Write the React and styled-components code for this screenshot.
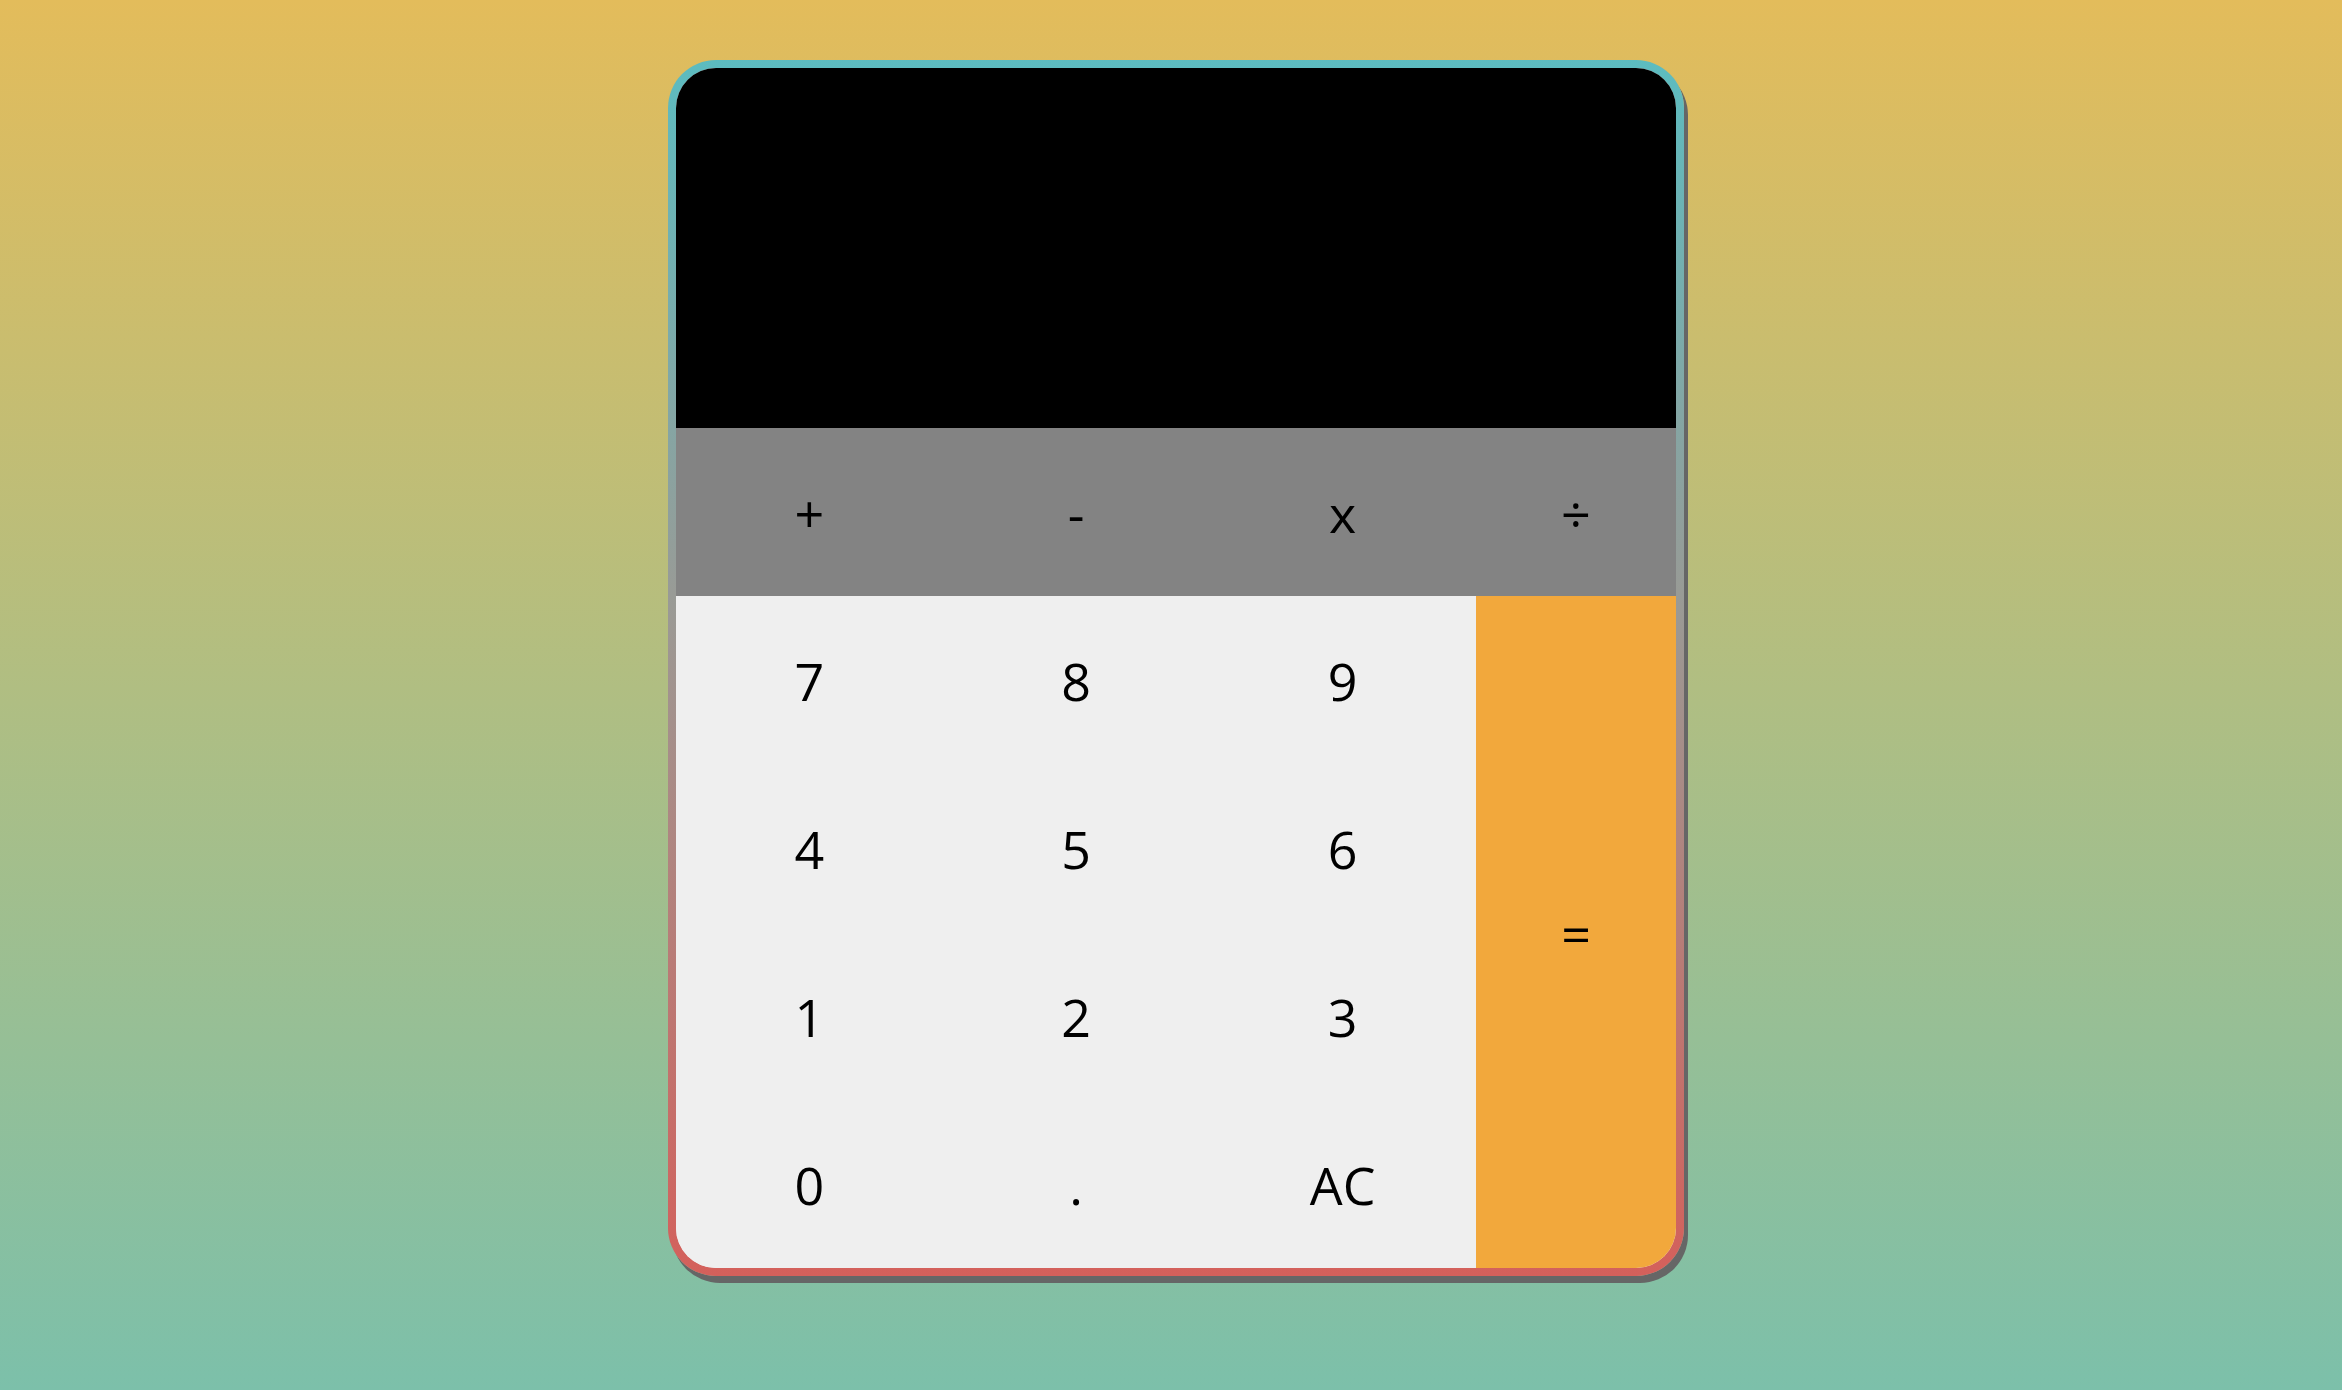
import styled, { createGlobalStyle } from 'styled-components';

const GlobalStyle = createGlobalStyle`
  html, body {
    margin: 0;
    padding: 0;
  }
  body {
    font-family: 'Open Sans', 'Noto Sans', sans-serif;
    background: linear-gradient(to bottom, #e3bc5b 0%, #7cc0aa 100%);
    min-height: 100vh;
  }
`;

function App() {
  const digits = ['7', '8', '9', '4', '5', '6', '1', '2', '3', '0', '.', 'AC'];
  return (
    <>
      <GlobalStyle />
      <Page>
        <Calculator>
          <Display></Display>
          <Operators>
            <Key $tone="op">+</Key>
            <Key $tone="op">-</Key>
            <Key $tone="op">x</Key>
            <Key $tone="op">÷</Key>
          </Operators>
          <Keypad>
            <Numbers>
              {digits.map((d) => (
                <Key key={d}>{d}</Key>
              ))}
            </Numbers>
            <Equals>=</Equals>
          </Keypad>
        </Calculator>
      </Page>
    </>
  );
}

export default App;

const Page = styled.div`
  display: flex;
  justify-content: center;
  align-items: flex-start;
  padding: 60px 0 0 10px;
  min-height: 100vh;
  box-sizing: border-box;
`;

const Calculator = styled.div`
  width: 1000px;
  border: 8px solid transparent;
  border-radius: 48px;
  background:
    linear-gradient(#efefef, #efefef) padding-box,
    linear-gradient(to bottom, #5cbcc0 0%, #9a9a95 45%, #d4605b 100%) border-box;
  box-shadow: 4px 7px 0 #666;
  overflow: hidden;
`;

const Display = styled.div`
  height: 360px;
  background: #000;
`;

const Operators = styled.div`
  display: grid;
  grid-template-columns: 1fr 1fr 1fr 200px;
  background: #838383;
  height: 168px;
`;

const Keypad = styled.div`
  display: grid;
  grid-template-columns: 800px 200px;
  height: 672px;
`;

const Numbers = styled.div`
  display: grid;
  grid-template-columns: repeat(3, 1fr);
  grid-template-rows: repeat(4, 168px);
  background: #efefef;
`;

const Key = styled.div`
  display: flex;
  align-items: center;
  justify-content: center;
  font-size: 52px;
  color: #000;
  background: ${(p) => (p.$tone === 'op' ? '#838383' : 'transparent')};
`;

const Equals = styled.div`
  display: flex;
  align-items: center;
  justify-content: center;
  background: #f2a83c;
  font-size: 52px;
  color: #000;
`;
